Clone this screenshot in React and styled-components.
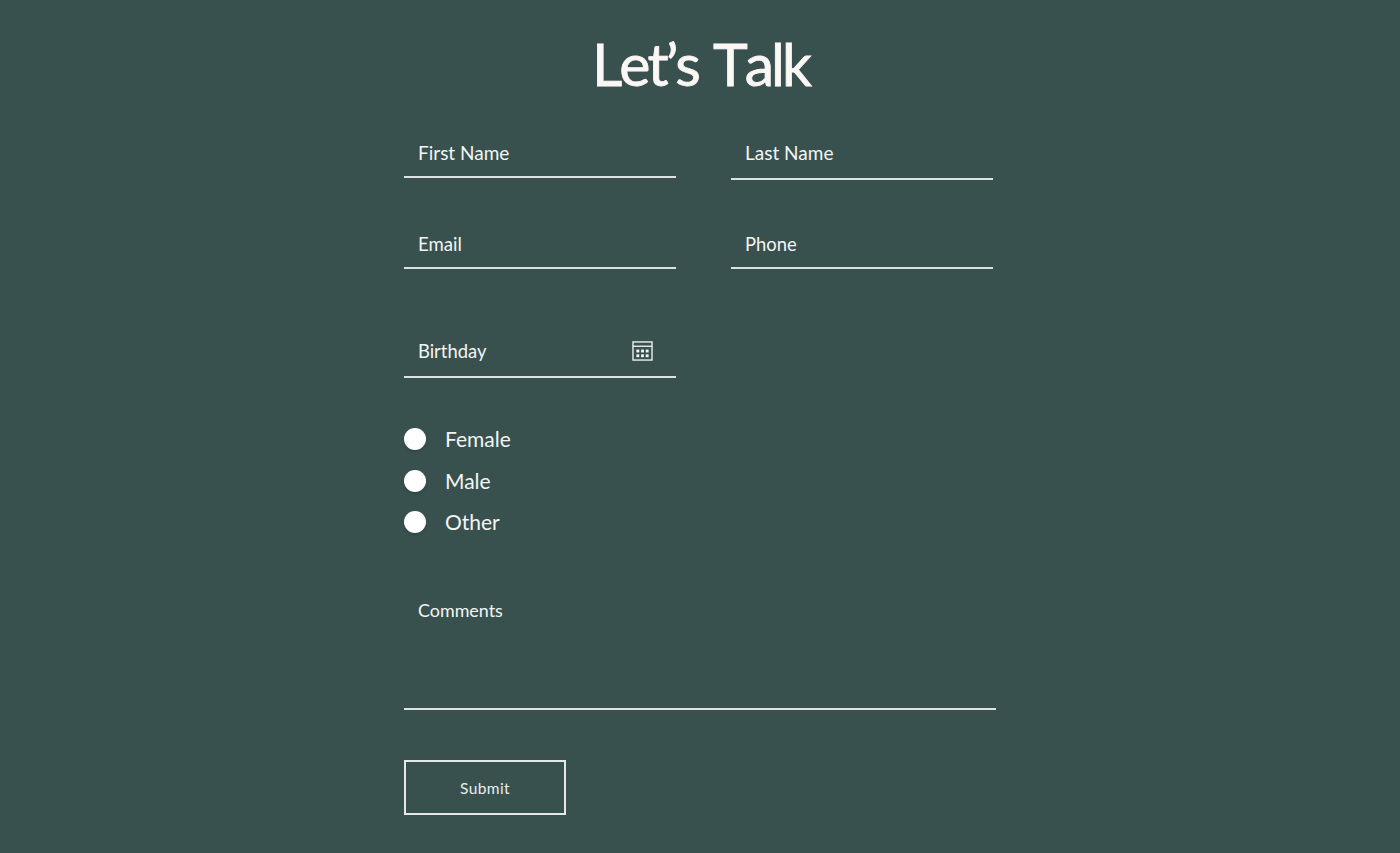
import React from 'react';
import styled, { createGlobalStyle } from 'styled-components';

const GlobalStyle = createGlobalStyle`
    html, body {
        margin: 0;
        padding: 0;
        background: #38514f;
    }
    body {
        font-family: "Lato", "Liberation Sans", sans-serif;
        color: #ffffff;
    }
`;

const Page = styled.div`
    width: 1400px;
    height: 853px;
    overflow: hidden;
    background: #38514f;
    display: flex;
    flex-direction: column;
    align-items: center;
`;

const Title = styled.h1`
    margin: 28px 0 0 1px;
    height: 72px;
    font-size: 59px;
    line-height: 72px;
    font-weight: 400;
    font-kerning: none;
    letter-spacing: -3px;
    word-spacing: 3px;
    color: #fbf7f4;
    -webkit-text-stroke: 0.8px #fbf7f4;
`;

const Form = styled.form`
    width: 592px;
    display: flex;
    flex-direction: column;
    align-items: flex-start;
`;

const Row = styled.div`
    display: flex;
    gap: 55px;
    margin-top: ${(p) => p.$top}px;
`;

const Field = styled.div`
    box-sizing: border-box;
    width: ${(p) => p.$width}px;
    height: ${(p) => p.$height}px;
    padding: ${(p) => p.$padTop || 0}px 23px 0 14px;
    display: flex;
    align-items: center;
    justify-content: space-between;
    border-bottom: 2px solid #dde3e2;
`;

const FieldLabel = styled.span`
    font-size: ${(p) => p.$size || 19}px;
    line-height: 24px;
    color: #f3f5f4;
`;

const CalendarIcon = styled.svg`
    width: 21px;
    height: 20px;
    display: block;
`;

const RadioGroup = styled.div`
    margin-top: 50px;
    display: flex;
    flex-direction: column;
    gap: 19.5px;
`;

const RadioRow = styled.label`
    display: flex;
    align-items: center;
    gap: 19px;
    height: 22px;
`;

const RadioDot = styled.span`
    width: 22px;
    height: 22px;
    border-radius: 50%;
    background: #ffffff;
    box-shadow: 0 2px 3px rgba(0, 0, 0, 0.15);
`;

const RadioText = styled.span`
    font-size: 21px;
    line-height: 24px;
    color: #f3f5f4;
`;

const Comments = styled.div`
    box-sizing: border-box;
    width: 592px;
    height: 134px;
    margin-top: 43px;
    padding: 22px 14px 0;
    border-bottom: 2px solid #dde3e2;
`;

const SubmitButton = styled.button`
    box-sizing: border-box;
    width: 162px;
    height: 55px;
    margin-top: 50px;
    padding: 0;
    background: transparent;
    border: 2px solid #e4e9e8;
    color: #e9edec;
    font-family: inherit;
    font-size: 15.5px;
    letter-spacing: 0.4px;
`;

const App = () => {
    return (
        <Page>
            <GlobalStyle />
            <Title>Let’s Talk</Title>
            <Form>
                <Row $top={28}>
                    <Field $width={272} $height={50} $padTop={2}><FieldLabel>First Name</FieldLabel></Field>
                    <Field $width={262} $height={52}><FieldLabel>Last Name</FieldLabel></Field>
                </Row>
                <Row $top={38}>
                    <Field $width={272} $height={51} $padTop={2}><FieldLabel $size={18.6}>Email</FieldLabel></Field>
                    <Field $width={262} $height={51} $padTop={2}><FieldLabel $size={18.4}>Phone</FieldLabel></Field>
                </Row>
                <Row $top={57}>
                    <Field $width={272} $height={52}>
                        <FieldLabel $size={18.4}>Birthday</FieldLabel>
                        <CalendarIcon viewBox="0 0 22 21" fill="none" stroke="#f3f5f4">
                            <rect x="1" y="1" width="20" height="19" strokeWidth="1.4" />
                            <path d="M1 5.5H21" strokeWidth="1.4" />
                            <g fill="#f3f5f4" stroke="none">
                                <rect x="4.6" y="9" width="3" height="3" />
                                <rect x="9.5" y="9" width="3" height="3" />
                                <rect x="14.4" y="9" width="3" height="3" />
                                <rect x="4.6" y="14" width="3" height="3" />
                                <rect x="9.5" y="14" width="3" height="3" />
                                <rect x="14.4" y="14" width="3" height="3" />
                            </g>
                        </CalendarIcon>
                    </Field>
                </Row>
                <RadioGroup>
                    {['Female', 'Male', 'Other'].map((option) => (
                        <RadioRow key={option}>
                            <RadioDot />
                            <RadioText>{option}</RadioText>
                        </RadioRow>
                    ))}
                </RadioGroup>
                <Comments><FieldLabel $size={17.9}>Comments</FieldLabel></Comments>
                <SubmitButton type="button">Submit</SubmitButton>
            </Form>
        </Page>
    );
};

export default App;
